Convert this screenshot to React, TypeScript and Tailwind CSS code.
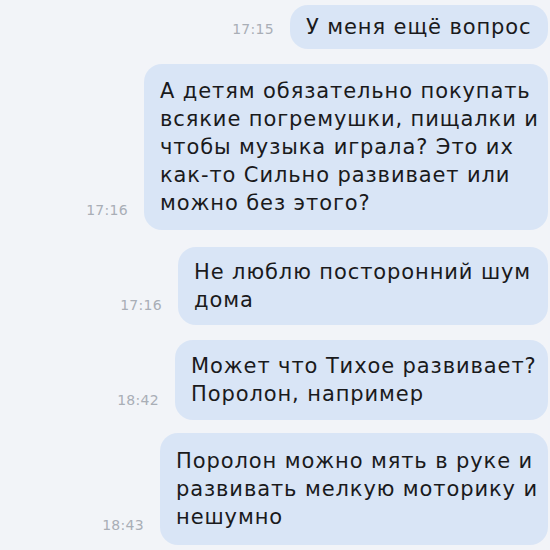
type Message = { time: string; width: string; gap: string; pad: string; lines: string[] };

const messages: Message[] = [
  { time: '17:15', width: 'w-[258px]', gap: 'mt-0', pad: 'py-[8px]', lines: ['У меня ещё вопрос'] },
  {
    time: '17:16',
    width: 'w-[404px]',
    gap: 'mt-[15px]',
    pad: 'py-[13px]',
    lines: [
      'А детям обязательно покупать',
      'всякие погремушки, пищалки и',
      'чтобы музыка играла? Это их',
      'как-то Сильно развивает или',
      'можно без этого?',
    ],
  },
  {
    time: '17:16',
    width: 'w-[370px]',
    gap: 'mt-[17px]',
    pad: 'py-[11px]',
    lines: ['Не люблю посторонний шум', 'дома'],
  },
  {
    time: '18:42',
    width: 'w-[373px]',
    gap: 'mt-[15px]',
    pad: 'py-[12px]',
    lines: ['Может что Тихое развивает?', 'Поролон, например'],
  },
  {
    time: '18:43',
    width: 'w-[388px]',
    gap: 'mt-[13px]',
    pad: 'py-[14px]',
    lines: ['Поролон можно мять в руке и', 'развивать мелкую моторику и', 'нешумно'],
  },
];

export default function App() {
  return (
    <div className="w-[550px] h-[550px] overflow-hidden bg-[#f2f4f8] font-['DejaVu_Sans',sans-serif]">
      <div className="flex flex-col pt-[5px] pr-[2px]">
        {messages.map((m, i) => (
          <div key={i} className={`flex items-end justify-end gap-[16px] ${m.gap}`}>
            <span className="mb-[10px] text-[14px] leading-[20px] tracking-[0.3px] text-[#a9aeb6]">{m.time}</span>
            <div
              className={`${m.width} ${m.pad} rounded-[18px] bg-[#d9e5f6] pl-[16px] text-[21px] leading-[28px] tracking-[0.9px] text-[#1a1a1c] whitespace-nowrap`}
            >
              {m.lines.map((l, j) => (
                <div key={j}>{l}</div>
              ))}
            </div>
          </div>
        ))}
      </div>
    </div>
  );
}
